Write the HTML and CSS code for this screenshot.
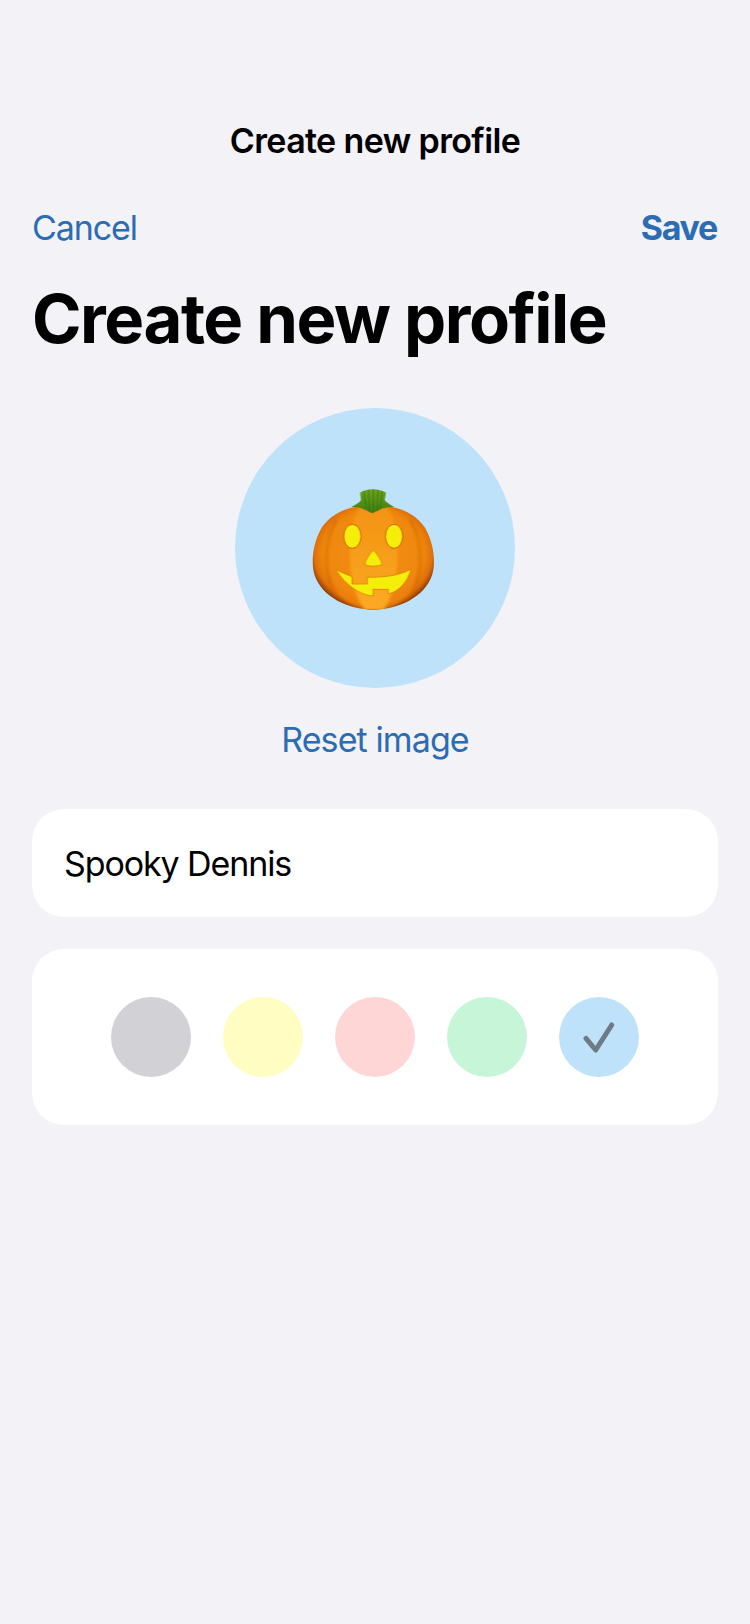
FILE: index.html
```html
<!DOCTYPE html>
<html lang="en">
<head>
<meta charset="utf-8">
<title>Create new profile</title>
<link rel="stylesheet" href="styles.css">
</head>
<body>
<main class="screen">
  <header class="sheet-title">Create new profile</header>
  <nav class="actions">
    <span class="action">Cancel</span>
    <span class="action action-strong">Save</span>
  </nav>
  <h1 class="heading">Create new profile</h1>
  <section class="avatar-block">
    <div class="avatar">
      <svg class="pumpkin" viewBox="0 0 510 468" aria-hidden="true">
        <defs>
          <radialGradient id="body" cx="50%" cy="46%" r="54%">
            <stop offset="0" stop-color="#fba818"/>
            <stop offset="0.7" stop-color="#f6950e"/>
            <stop offset="0.9" stop-color="#e0700a"/>
            <stop offset="1" stop-color="#8f3a08"/>
          </radialGradient>
          <linearGradient id="rib" x1="0" y1="0" x2="0" y2="1">
            <stop offset="0" stop-color="#f39212"/>
            <stop offset="1" stop-color="#fbaa24"/>
          </linearGradient>
          <linearGradient id="stem" x1="0" y1="0" x2="0" y2="1">
            <stop offset="0" stop-color="#6da41d"/>
            <stop offset="1" stop-color="#3f7c10"/>
          </linearGradient>
          <filter id="soft" x="-10%" y="-10%" width="120%" height="120%">
            <feGaussianBlur stdDeviation="4"/>
          </filter>
          <clipPath id="shape">
            <path d="M250 108C192 104 130 122 96 172C68 218 62 280 74 316C96 382 176 419 250 419C324 419 404 382 426 316C438 280 432 218 404 172C370 122 308 104 250 108Z"/>
          </clipPath>
        </defs>
        <path d="M250 108C192 104 130 122 96 172C68 218 62 280 74 316C96 382 176 419 250 419C324 419 404 382 426 316C438 280 432 218 404 172C370 122 308 104 250 108Z" fill="url(#body)"/>
        <g clip-path="url(#shape)">
          <g filter="url(#soft)">
            <path d="M205 112C118 156 88 270 130 352C148 386 185 408 222 420C176 340 165 200 205 112Z" fill="#ee840a" opacity=".75"/>
            <path d="M298 112C384 156 412 270 372 352C354 386 317 408 280 420C326 340 338 200 298 112Z" fill="#ee840a" opacity=".75"/>
            <path d="M140 150C96 225 98 322 150 392" fill="none" stroke="#c9590a" stroke-width="7" opacity=".6"/>
            <path d="M360 150C404 225 402 322 350 392" fill="none" stroke="#c9590a" stroke-width="7" opacity=".6"/>
          </g>
          <path d="M204 112C170 210 172 350 222 420C240 424 262 424 282 420C330 350 332 210 296 112C266 106 234 106 204 112Z" fill="url(#rib)" filter="url(#soft)"/>
        </g>
        <path d="M184 111C198 104 208 98 213 90L210 68C226 54 270 54 288 68L284 90C290 98 300 104 312 111C292 110 278 114 268 120L246 130L226 120C212 112 200 110 184 111Z" fill="url(#stem)"/>
        <path d="M222 64L228 114M236 60L238 122M250 58L250 128M264 60L262 122M276 64L272 114" fill="none" stroke="#2f6a0c" stroke-width="3.500" opacity=".5"/>
        <ellipse cx="187" cy="199" rx="26" ry="36" fill="#f4ee0a" stroke="#cf5f0b" stroke-width="3"/>
        <ellipse cx="312" cy="199" rx="26" ry="36" fill="#f4ee0a" stroke="#cf5f0b" stroke-width="3"/>
        <path d="M250 241C260 250 272 268 276 283C262 290 236 290 224 283C228 268 240 250 250 241Z" fill="#f4ee0a" stroke="#e0760b" stroke-width="2"/>
        <path d="M138 299C160 310 176 316 186 320L186 342L232 342L232 322C280 322 325 318 363 298C352 336 330 362 295 372L295 358L249 358L249 378C214 376 168 348 138 299Z" fill="#f4ee0a" stroke="#dc6e0a" stroke-width="2"/>
      </svg>
    </div>
    <span class="reset">Reset image</span>
  </section>
  <section class="card name-card">Spooky Dennis</section>
  <section class="card swatches">
    <span class="swatch swatch-gray"></span>
    <span class="swatch swatch-yellow"></span>
    <span class="swatch swatch-red"></span>
    <span class="swatch swatch-green"></span>
    <span class="swatch swatch-blue">
      <svg class="check" viewBox="0 0 34 32" aria-hidden="true">
        <path d="M4 17.300L13.700 29L29.700 4" fill="none" stroke="#6e7b87" stroke-width="5" stroke-linecap="round" stroke-linejoin="round"/>
      </svg>
    </span>
  </section>
</main>
</body>
</html>
```

FILE: styles.css
```css
* { box-sizing: border-box; }
html, body { margin: 0; padding: 0; }
body {
  background: #f2f2f7;
  color: #000;
  font-family: Inter, "Liberation Sans", sans-serif;
}
.screen {
  width: 750px;
  height: 1624px;
  padding: 119px 32px 0;
  display: flex;
  flex-direction: column;
}
.sheet-title {
  font-size: 34px;
  line-height: 44px;
  font-weight: 600;
  letter-spacing: -0.62px;
  text-align: center;
}
.actions {
  display: flex;
  justify-content: space-between;
  margin-top: 43px;
  font-size: 34px;
  line-height: 44px;
  letter-spacing: -1.1px;
  color: #2b6cb3;
}
.action-strong {
  font-weight: 700;
  letter-spacing: -1.3px;
  margin-right: 1px;
}
.heading {
  margin: 28px 0 0;
  font-size: 67px;
  line-height: 82px;
  font-weight: 700;
  letter-spacing: -1.45px;
}
.avatar-block {
  display: flex;
  flex-direction: column;
  align-items: center;
  margin-top: 48px;
}
.avatar {
  width: 280px;
  height: 280px;
  border-radius: 50%;
  background: #bee2f9;
  display: flex;
  align-items: center;
  justify-content: center;
}
.pumpkin { width: 170px; height: 156px; }
.reset {
  margin-top: 30px;
  font-size: 34px;
  line-height: 44px;
  letter-spacing: -0.9px;
  color: #2b6cb3;
}
.card {
  background: #fff;
  border-radius: 32px;
}
.name-card {
  margin-top: 47px;
  height: 108px;
  padding: 0 32px;
  display: flex;
  align-items: center;
  font-size: 34px;
  letter-spacing: -1.1px;
}
.swatches {
  margin-top: 32px;
  height: 176px;
  display: flex;
  align-items: center;
  justify-content: center;
  gap: 32px;
}
.swatch {
  width: 80px;
  height: 80px;
  border-radius: 50%;
  display: flex;
  align-items: center;
  justify-content: center;
}
.swatch-gray { background: #d1d1d6; }
.swatch-yellow { background: #fffdc1; }
.swatch-red { background: #ffd6d6; }
.swatch-green { background: #c6f6d7; }
.swatch-blue { background: #bee2f9; }
.check { width: 34px; height: 32px; }
```
